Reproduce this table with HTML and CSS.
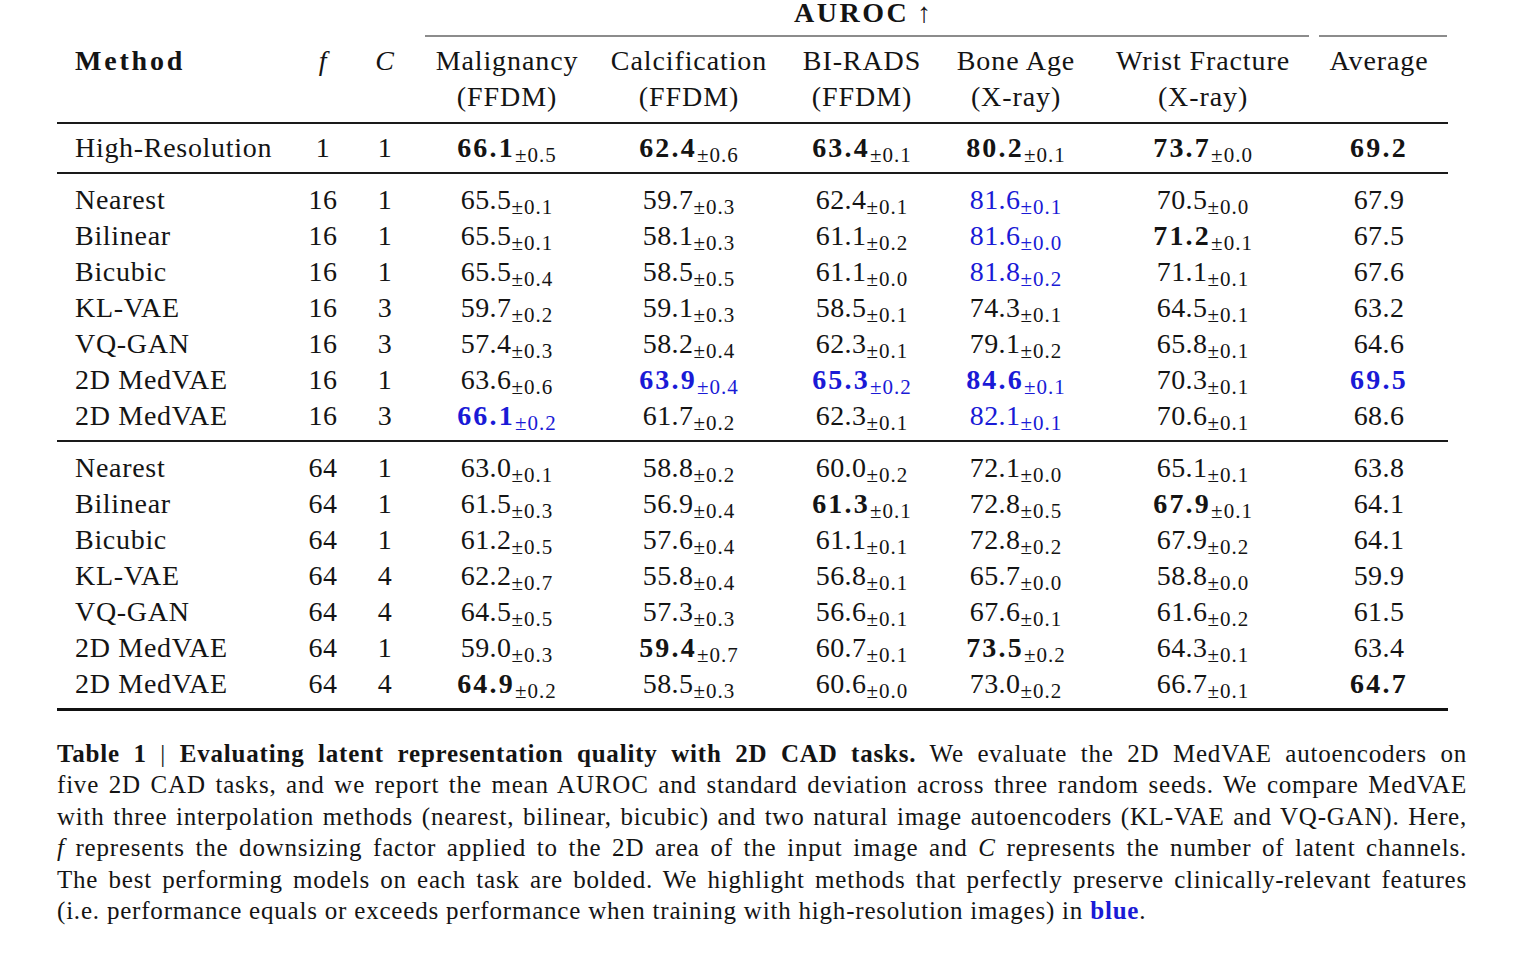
FILE: index.html
```html
<!DOCTYPE html>
<html lang="en">
<head>
<meta charset="utf-8">
<title>Table 1</title>
<link rel="stylesheet" href="styles.css">
</head>
<body>
<div class="page">
  <table class="results">
    <colgroup>
      <col class="c-method"><col class="c-f"><col class="c-c"><col class="c-mal"><col class="c-calc"><col class="c-bi"><col class="c-bone"><col class="c-wrist"><col class="c-avg">
    </colgroup>
    <thead>
      <tr class="group-row">
        <th colspan="3"></th>
        <th colspan="5"><div class="cmid cmid-auroc"><span class="bold-head auroc">AUROC</span> <span class="arrow">↑</span></div></th>
        <th><div class="cmid cmid-avg"></div></th>
      </tr>
      <tr class="head-row">
        <th class="m"><span class="bold-head">Method</span></th>
        <th><i>f</i></th>
        <th><i>C</i></th>
        <th>Malignancy<br>(FFDM)</th>
        <th>Calcification<br>(FFDM)</th>
        <th>BI-RADS<br>(FFDM)</th>
        <th>Bone Age<br>(X-ray)</th>
        <th>Wrist Fracture<br>(X-ray)</th>
        <th>Average</th>
      </tr>
    </thead>
    <tbody class="ref">
      <tr class="single">
        <td class="m">High-Resolution</td><td>1</td><td>1</td>
        <td><b>66.1</b><sub>±0.5</sub></td>
        <td><b>62.4</b><sub>±0.6</sub></td>
        <td><b>63.4</b><sub>±0.1</sub></td>
        <td><b>80.2</b><sub>±0.1</sub></td>
        <td><b>73.7</b><sub>±0.0</sub></td>
        <td><b>69.2</b></td>
      </tr>
    </tbody>
    <tbody class="grp">
      <tr class="first">
        <td class="m">Nearest</td><td>16</td><td>1</td>
        <td>65.5<sub>±0.1</sub></td><td>59.7<sub>±0.3</sub></td><td>62.4<sub>±0.1</sub></td>
        <td class="blue">81.6<sub>±0.1</sub></td><td>70.5<sub>±0.0</sub></td><td>67.9</td>
      </tr>
      <tr>
        <td class="m">Bilinear</td><td>16</td><td>1</td>
        <td>65.5<sub>±0.1</sub></td><td>58.1<sub>±0.3</sub></td><td>61.1<sub>±0.2</sub></td>
        <td class="blue">81.6<sub>±0.0</sub></td><td><b>71.2</b><sub>±0.1</sub></td><td>67.5</td>
      </tr>
      <tr>
        <td class="m">Bicubic</td><td>16</td><td>1</td>
        <td>65.5<sub>±0.4</sub></td><td>58.5<sub>±0.5</sub></td><td>61.1<sub>±0.0</sub></td>
        <td class="blue">81.8<sub>±0.2</sub></td><td>71.1<sub>±0.1</sub></td><td>67.6</td>
      </tr>
      <tr>
        <td class="m">KL-VAE</td><td>16</td><td>3</td>
        <td>59.7<sub>±0.2</sub></td><td>59.1<sub>±0.3</sub></td><td>58.5<sub>±0.1</sub></td>
        <td>74.3<sub>±0.1</sub></td><td>64.5<sub>±0.1</sub></td><td>63.2</td>
      </tr>
      <tr>
        <td class="m">VQ-GAN</td><td>16</td><td>3</td>
        <td>57.4<sub>±0.3</sub></td><td>58.2<sub>±0.4</sub></td><td>62.3<sub>±0.1</sub></td>
        <td>79.1<sub>±0.2</sub></td><td>65.8<sub>±0.1</sub></td><td>64.6</td>
      </tr>
      <tr>
        <td class="m">2D MedVAE</td><td>16</td><td>1</td>
        <td>63.6<sub>±0.6</sub></td><td class="blue"><b>63.9</b><sub>±0.4</sub></td><td class="blue"><b>65.3</b><sub>±0.2</sub></td>
        <td class="blue"><b>84.6</b><sub>±0.1</sub></td><td>70.3<sub>±0.1</sub></td><td class="blue"><b>69.5</b></td>
      </tr>
      <tr class="last">
        <td class="m">2D MedVAE</td><td>16</td><td>3</td>
        <td class="blue"><b>66.1</b><sub>±0.2</sub></td><td>61.7<sub>±0.2</sub></td><td>62.3<sub>±0.1</sub></td>
        <td class="blue">82.1<sub>±0.1</sub></td><td>70.6<sub>±0.1</sub></td><td>68.6</td>
      </tr>
    </tbody>
    <tbody class="grp grp-end">
      <tr class="first">
        <td class="m">Nearest</td><td>64</td><td>1</td>
        <td>63.0<sub>±0.1</sub></td><td>58.8<sub>±0.2</sub></td><td>60.0<sub>±0.2</sub></td>
        <td>72.1<sub>±0.0</sub></td><td>65.1<sub>±0.1</sub></td><td>63.8</td>
      </tr>
      <tr>
        <td class="m">Bilinear</td><td>64</td><td>1</td>
        <td>61.5<sub>±0.3</sub></td><td>56.9<sub>±0.4</sub></td><td><b>61.3</b><sub>±0.1</sub></td>
        <td>72.8<sub>±0.5</sub></td><td><b>67.9</b><sub>±0.1</sub></td><td>64.1</td>
      </tr>
      <tr>
        <td class="m">Bicubic</td><td>64</td><td>1</td>
        <td>61.2<sub>±0.5</sub></td><td>57.6<sub>±0.4</sub></td><td>61.1<sub>±0.1</sub></td>
        <td>72.8<sub>±0.2</sub></td><td>67.9<sub>±0.2</sub></td><td>64.1</td>
      </tr>
      <tr>
        <td class="m">KL-VAE</td><td>64</td><td>4</td>
        <td>62.2<sub>±0.7</sub></td><td>55.8<sub>±0.4</sub></td><td>56.8<sub>±0.1</sub></td>
        <td>65.7<sub>±0.0</sub></td><td>58.8<sub>±0.0</sub></td><td>59.9</td>
      </tr>
      <tr>
        <td class="m">VQ-GAN</td><td>64</td><td>4</td>
        <td>64.5<sub>±0.5</sub></td><td>57.3<sub>±0.3</sub></td><td>56.6<sub>±0.1</sub></td>
        <td>67.6<sub>±0.1</sub></td><td>61.6<sub>±0.2</sub></td><td>61.5</td>
      </tr>
      <tr>
        <td class="m">2D MedVAE</td><td>64</td><td>1</td>
        <td>59.0<sub>±0.3</sub></td><td><b>59.4</b><sub>±0.7</sub></td><td>60.7<sub>±0.1</sub></td>
        <td><b>73.5</b><sub>±0.2</sub></td><td>64.3<sub>±0.1</sub></td><td>63.4</td>
      </tr>
      <tr class="last">
        <td class="m">2D MedVAE</td><td>64</td><td>4</td>
        <td><b>64.9</b><sub>±0.2</sub></td><td>58.5<sub>±0.3</sub></td><td>60.6<sub>±0.0</sub></td>
        <td>73.0<sub>±0.2</sub></td><td>66.7<sub>±0.1</sub></td><td><b>64.7</b></td>
      </tr>
    </tbody>
  </table>

  <div class="caption">
    <span class="line"><b class="cap-b">Table 1</b> <span class="bar">|</span> <b class="cap-b">Evaluating latent representation quality with 2D CAD tasks.</b> We evaluate the 2D MedVAE autoencoders on</span>
    <span class="line">five 2D CAD tasks, and we report the mean AUROC and standard deviation across three random seeds. We compare MedVAE</span>
    <span class="line">with three interpolation methods (nearest, bilinear, bicubic) and two natural image autoencoders (KL-VAE and VQ-GAN). Here,</span>
    <span class="line"><i>f</i> represents the downsizing factor applied to the 2D area of the input image and <i>C</i> represents the number of latent channels.</span>
    <span class="line">The best performing models on each task are bolded. We highlight methods that perfectly preserve clinically-relevant features</span>
    <span class="line line-last">(i.e. performance equals or exceeds performance when training with high-resolution images) in <b class="cap-b blue">blue</b>.</span>
  </div>
</div>
</body>
</html>
```

FILE: styles.css
```css
* {
  box-sizing: border-box;
}

html,
body {
  margin: 0;
  padding: 0;
  background: #ffffff;
}

body {
  font-family: "Liberation Serif", "Times New Roman", serif;
  color: #141414;
}

.page {
  width: 1529px;
  padding-left: 57px;
}

/* ---------- table ---------- */

.results {
  border-collapse: separate;
  border-spacing: 0;
  table-layout: fixed;
  width: 1391px;
  font-size: 28px;
}

.c-method { width: 243px; }
.c-f { width: 46px; }
.c-c { width: 78px; }
.c-mal { width: 166px; }
.c-calc { width: 198px; }
.c-bi { width: 148px; }
.c-bone { width: 160px; }
.c-wrist { width: 214px; }
.c-avg { width: 138px; }

.results th,
.results td {
  padding: 0;
  font-weight: normal;
  line-height: 36px;
  text-align: center;
  vertical-align: top;
  white-space: nowrap;
  letter-spacing: 0.4px;
}

.results th {
  letter-spacing: 0.9px;
}

.results .m {
  text-align: left;
  padding-left: 18px;
  letter-spacing: 0.7px;
}

.group-row th {
  line-height: 25px;
  height: 37px;
}

.cmid {
  height: 37px;
  padding-bottom: 10px;
  border-bottom: 2px solid #8c8c8c;
}

.cmid-auroc {
  margin: 0 1px;
  padding-right: 8px;
}

.cmid-avg {
  margin: 0 1px 0 9px;
}

.bold-head {
  font-weight: bold;
  letter-spacing: 0.1em;
}

.bold-head.auroc {
  letter-spacing: 0.09em;
}

.arrow {
  font-weight: normal;
}

.head-row th {
  padding-top: 6px;
  padding-bottom: 7px;
  border-bottom: 2px solid #1a1a1a;
}

.ref td {
  padding-top: 6px;
  padding-bottom: 6px;
  border-bottom: 2px solid #1a1a1a;
}

.grp .first td {
  padding-top: 8px;
}

.grp .last td {
  padding-bottom: 6px;
  border-bottom: 2px solid #1a1a1a;
}

.grp-end .last td {
  border-bottom: 3px solid #111111;
}

.results b {
  font-weight: bold;
  letter-spacing: 0.08em;
}

.results sub {
  font-size: 21px;
  line-height: 0;
  vertical-align: -5px;
  letter-spacing: 1px;
}

.blue {
  color: #1a1ad6;
}

/* ---------- caption ---------- */

.caption {
  width: 1410px;
  margin-top: 27px;
  font-size: 25px;
  line-height: 31.4px;
  letter-spacing: 0.8px;
}

.caption .line {
  display: block;
  text-align: justify;
  text-align-last: justify;
}

.caption .line-last {
  text-align-last: left;
}

.caption .cap-b {
  font-weight: bold;
  letter-spacing: 0.8px;
}

.caption .bar {
  font-weight: normal;
}
```
